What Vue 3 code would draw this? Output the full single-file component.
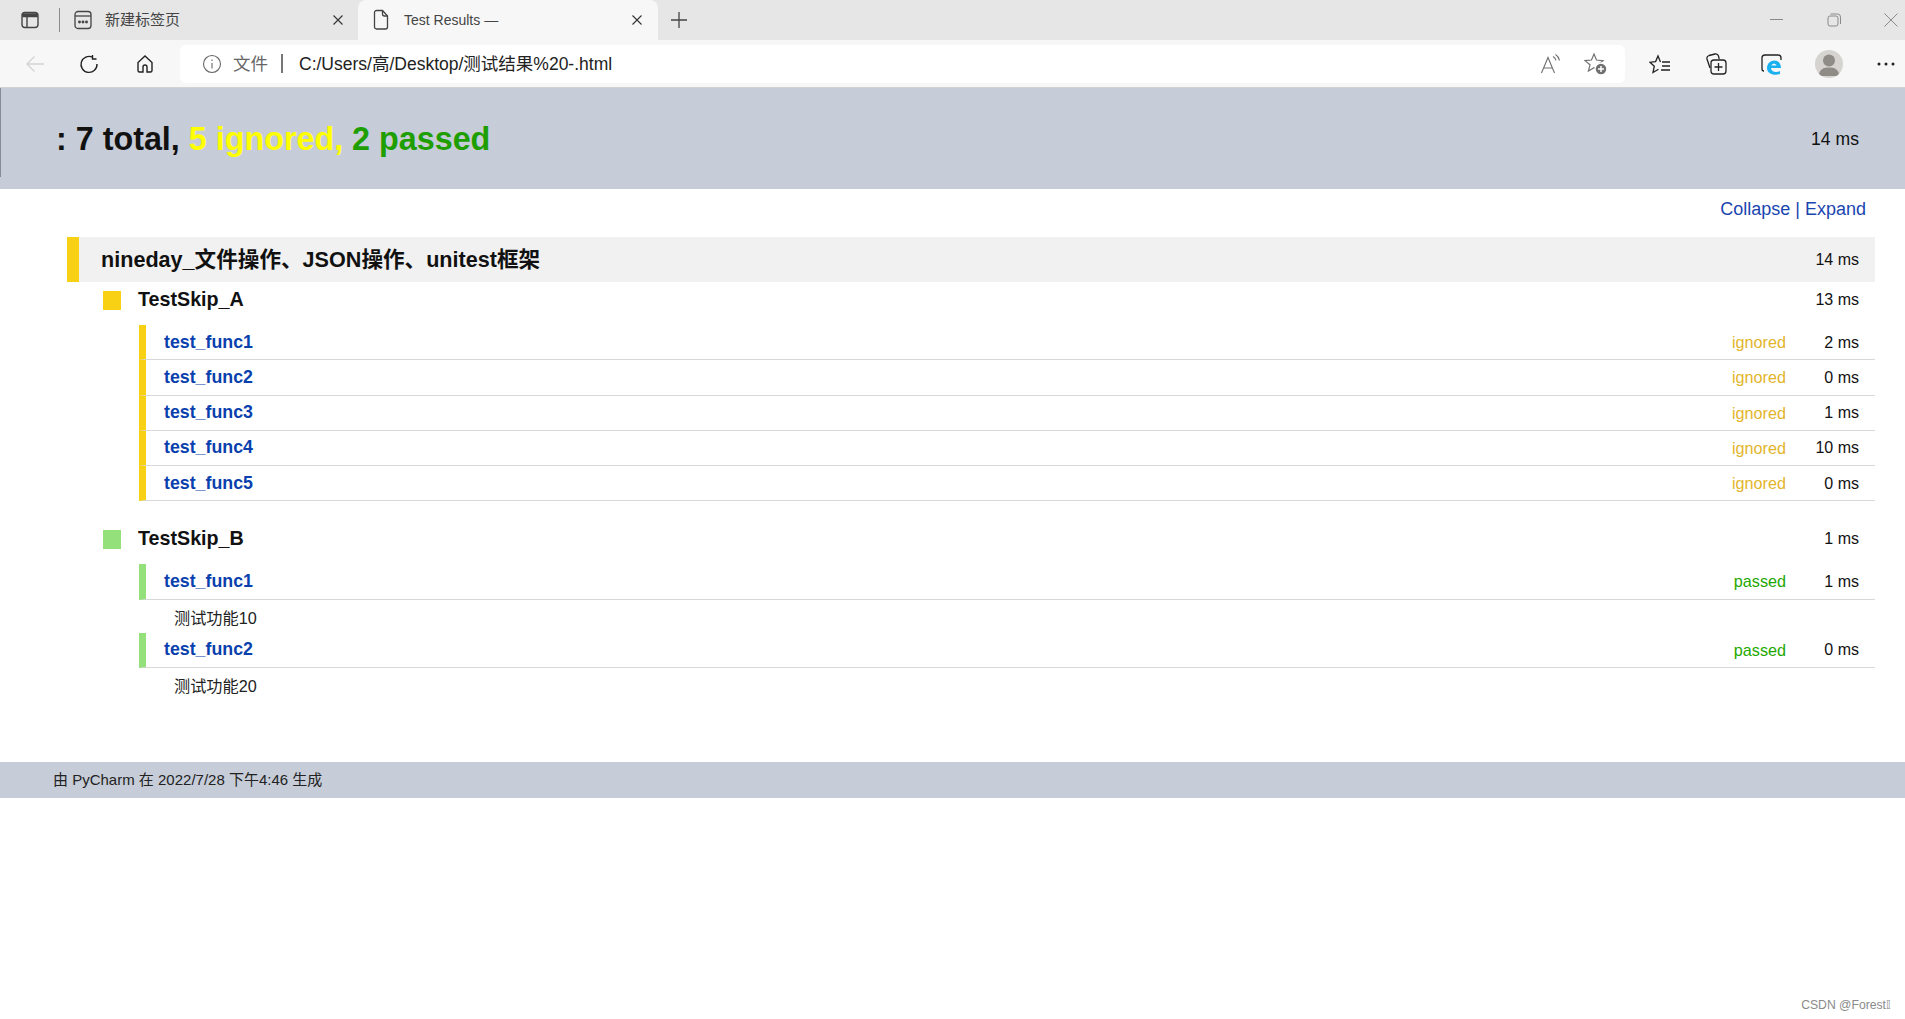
<script setup>
const ignored = [
  ['test_func1', '2 ms'],
  ['test_func2', '0 ms'],
  ['test_func3', '1 ms'],
  ['test_func4', '10 ms'],
  ['test_func5', '0 ms'],
]
const passed = [
  ['test_func1', '1 ms', '测试功能10'],
  ['test_func2', '0 ms', '测试功能20'],
]
</script>

<template>
  <div class="page">
    <div class="tabstrip">
      <svg class="tabside" width="20" height="20" viewBox="0 0 20 20" fill="none" stroke="#444" stroke-width="1.4">
        <rect x="2" y="2.500" width="16" height="15" rx="3" />
        <path d="M3 4h14v2.500H3z" fill="#444" />
        <path d="M7 6v11" />
      </svg>
      <span class="tabsep"></span>
      <div class="tab">
        <svg width="18" height="20" viewBox="0 0 18 20" fill="none" stroke="#444" stroke-width="1.3">
          <rect x="1" y="1.500" width="16" height="17" rx="3" />
          <path d="M1 6h16" />
          <circle cx="5.500" cy="12" r=".8" fill="#444" />
          <circle cx="9" cy="12" r=".8" fill="#444" />
          <circle cx="12.500" cy="12" r=".8" fill="#444" />
        </svg>
        <span class="tabtitle cjk">新建标签页</span>
        <svg class="tabclose" width="12" height="12" viewBox="0 0 12 12" stroke="#333" stroke-width="1.1"><path d="M1.500 1.500l9 9M10.500 1.500l-9 9" /></svg>
      </div>
      <div class="tab active">
        <svg width="18" height="22" viewBox="0 0 18 22" fill="none" stroke="#444" stroke-width="1.3">
          <path d="M4.500 1.500h6l5 5.500v11a2 2 0 0 1-2 2h-9a2 2 0 0 1-2-2V3.500a2 2 0 0 1 2-2z" />
          <path d="M10.500 1.500V5a2 2 0 0 0 2 2h3" />
        </svg>
        <span class="tabtitle">Test Results —</span>
        <svg class="tabclose" width="12" height="12" viewBox="0 0 12 12" stroke="#333" stroke-width="1.1"><path d="M1.500 1.500l9 9M10.500 1.500l-9 9" /></svg>
      </div>
      <svg class="newtab" width="18" height="18" viewBox="0 0 18 18" stroke="#444" stroke-width="1.3"><path d="M9 1v16M1 9h16" /></svg>
      <div class="winctl">
        <svg width="14" height="14" viewBox="0 0 14 14" stroke="#8a8a8a" stroke-width="1"><path d="M0 6.500h13" /></svg>
        <svg width="14" height="14" viewBox="0 0 14 14" fill="none" stroke="#8a8a8a" stroke-width="1"><rect x="1" y="3" width="10" height="10" rx="2" /><path d="M3.500 1h7a3 3 0 0 1 3 3v7" /></svg>
        <svg width="14" height="14" viewBox="0 0 14 14" stroke="#8a8a8a" stroke-width="1"><path d="M.5.5l13 13M13.500.5l-13 13" /></svg>
      </div>
    </div>

    <div class="toolbar">
      <svg class="navicon back" width="20" height="20" viewBox="0 0 20 20" fill="none" stroke="#d4d4d4" stroke-width="1.3"><path d="M19 10H2M9.500 2.500L2 10l7.500 7.500" /></svg>
      <svg class="navicon reload" width="20" height="20" viewBox="0 0 20 20" fill="none" stroke="#222" stroke-width="1.4"><path d="M13.500 3.200A8 8 0 1 0 18 10" /><path d="M13.500 1v4h4" /></svg>
      <svg class="navicon home" width="20" height="20" viewBox="0 0 20 20" fill="none" stroke="#222" stroke-width="1.4"><path d="M8 18H4.500A1.500 1.500 0 0 1 3 16.500V8.500l7-6.500 7 6.500v8a1.500 1.500 0 0 1-1.500 1.500H12v-5a2 2 0 0 0-4 0z" /></svg>
      <div class="address">
        <svg width="20" height="20" viewBox="0 0 20 20" fill="none" stroke="#666" stroke-width="1.1"><circle cx="10" cy="10" r="8.500" /><path d="M10 9v5.500M10 5.500v1.500" /></svg>
        <span class="origin">文件</span>
        <span class="addrsep"></span>
        <span class="url">C:/Users/高/Desktop/测试结果%20-.html</span>
        <div class="addricons">
          <svg width="22" height="22" viewBox="0 0 22 22" fill="none" stroke="#707070" stroke-width="1.100"><path d="M1.500 20L8 4.500 14.500 20M3.800 15h8.400" /><path d="M13 3.500a6 6 0 0 1 3 4M15.500 1.500a9 9 0 0 1 4 6" /></svg>
          <svg width="24" height="24" viewBox="0 0 24 24" fill="none" stroke="#707070" stroke-width="1.200"><path d="M10 2l2.500 6 6.500.6-5 4.200 1.600 6.200-5.600-3.300-5.600 3.300L6 12.800 1 8.600 7.500 8z" /><circle cx="17" cy="17" r="6" fill="#707070" stroke="#fff" stroke-width="1.500" /><path d="M17 14v6M14 17h6" stroke="#fff" stroke-width="1.500" /></svg>
        </div>
      </div>
      <div class="tools">
        <svg width="22" height="22" viewBox="0 0 22 22" fill="none" stroke="#222" stroke-width="1.300"><path d="M11.500 9L9 3 6.600 8.600 1 9.200l4.300 4L4 19.500l5.500-3.200" /><path d="M13 9h8M13 13h8M12 17h9" /></svg>
        <svg width="22" height="22" viewBox="0 0 22 22" fill="none" stroke="#222" stroke-width="1.300"><path d="M5 15L2 6a3 3 0 0 1 2-3.500L10 1a3 3 0 0 1 3.500 2l.7 3" /><rect x="6" y="7" width="15" height="14" rx="3" /><path d="M13.500 10v8M9.500 14h8" /></svg>
        <svg width="24" height="24" viewBox="0 0 24 24" fill="none"><path d="M5 19a2 2 0 0 1-2-2V6a3 3 0 0 1 3-3h13a3 3 0 0 1 3 3v2" stroke="#222" stroke-width="1.300" /><path d="M22 16h-10c.2 4 5 5 9 3v3c-6 2-13 0-13-6 0-6 6-9 10-7 2 1 4 3 4 7zM17.500 13.500c-.5-2.500-4.500-2.500-5 0z" fill="#1bb1f0" /></svg>
        <span class="avatar">
          <svg width="28" height="28" viewBox="0 0 28 28"><circle cx="14" cy="10.500" r="6" fill="#8f8c88" /><path d="M3.500 26c1-7 5-8.500 10.500-8.500S23.500 19 24.500 26z" fill="#8f8c88" /></svg>
        </span>
        <svg class="more" width="18" height="6" viewBox="0 0 18 6" fill="#222"><circle cx="2" cy="3" r="1.500" /><circle cx="9" cy="3" r="1.500" /><circle cx="16" cy="3" r="1.500" /></svg>
      </div>
    </div>

    <div class="report">
      <header class="summary">
        <h1><span>: 7 total, </span><span class="yellow">5 ignored, </span><span class="green">2 passed</span></h1>
        <span class="ms big">14 ms</span>
      </header>

      <div class="controls"><a>Collapse</a> | <a>Expand</a></div>

      <main class="results">
        <div class="suite">
          <span class="suitebar"></span>
          <span class="suitename">nineday_文件操作、JSON操作、unitest框架</span>
          <span class="ms">14 ms</span>
        </div>

        <div class="klass">
          <span class="square sq-yellow"></span>
          <span class="klassname">TestSkip_A</span>
          <span class="ms">13 ms</span>
        </div>
        <div class="tests">
          <div v-for="t in ignored" :key="t[0]" class="test ignored">
            <span class="testname">{{ t[0] }}</span>
            <span class="status st-ignored">ignored</span>
            <span class="ms time">{{ t[1] }}</span>
          </div>
        </div>

        <div class="klass second">
          <span class="square sq-green"></span>
          <span class="klassname">TestSkip_B</span>
          <span class="ms">1 ms</span>
        </div>
        <div class="tests">
          <template v-for="t in passed" :key="t[0]">
            <div class="test pass">
              <span class="testname">{{ t[0] }}</span>
              <span class="status st-passed">passed</span>
              <span class="ms time">{{ t[1] }}</span>
            </div>
            <div class="desc">{{ t[2] }}</div>
          </template>
        </div>
      </main>

      <footer class="foot">由 PyCharm 在 2022/7/28 下午4:46 生成</footer>
    </div>
    <div class="mark">CSDN @Forest𝕀</div>
  </div>
</template>

<style>
html, body { margin: 0; background: #fff; overflow: hidden; }
</style>

<style scoped>
.page {
  position: relative;
  height: 1019px;
  font-family: "Liberation Sans", "Noto Sans CJK SC", sans-serif;
  color: #111;
  background: #fff;
  overflow: hidden;
}
.tabstrip {
  height: 40px;
  background: #e6e6e6;
  display: flex;
  align-items: center;
  box-sizing: border-box;
}
.tabside { margin-left: 20px; }
.tabsep { width: 1px; height: 24px; background: #8c8c8c; margin: 0 14px 0 19px; }
.tab {
  height: 40px;
  width: 273px;
  display: flex;
  align-items: center;
  box-sizing: border-box;
  font-size: 15px;
  color: #444;
}
.tab.active {
  width: 300px;
  margin-left: 11px;
  padding-left: 14px;
  background: #f7f7f7;
  border-radius: 8px 8px 0 0;
  font-size: 14px;
}
.tabtitle { margin-left: 13px; flex: 1; }
.tabtitle.cjk { padding-bottom: 3px; }
.tab.active .tabtitle { margin-left: 14px; }
.tabclose { margin-right: 3px; }
.tab.active .tabclose { margin-right: 15px; }
.newtab { margin-left: 12px; }
.winctl {
  margin-left: auto;
  display: flex;
  gap: 43px;
  padding-right: 7px;
  align-items: center;
}
.toolbar {
  height: 48px;
  background: #f7f7f7;
  border-bottom: 1px solid #d2d2d2;
  box-sizing: border-box;
  display: flex;
  align-items: center;
}
.navicon.back { margin-left: 25px; }
.navicon.reload { margin-left: 34px; }
.navicon.home { margin-left: 36px; }
.address {
  margin-left: 25px;
  width: 1445px;
  height: 38px;
  background: #fff;
  border-radius: 6px;
  box-sizing: border-box;
  padding-left: 22px;
  display: flex;
  align-items: center;
}
.origin { font-size: 17.500px; color: #666; margin-left: 11px; padding-bottom: 2px; }
.addrsep { width: 2px; height: 19px; background: #777; margin: 0 16px 0 13px; }
.url { font-size: 17.500px; color: #222; padding-bottom: 2px; }
.addricons {
  margin-left: auto;
  display: flex;
  gap: 22px;
  align-items: center;
  padding-right: 17px;
}
.tools { display: flex; align-items: center; margin-left: 24px; }
.tools > svg:nth-child(2) { margin-left: 34px; }
.tools > svg:nth-child(3) { margin-left: 32px; }
.avatar {
  width: 28px;
  height: 28px;
  margin-left: 32px;
  border-radius: 50%;
  background: #d6d4d0;
  overflow: hidden;
}
.avatar svg { display: block; }
.more { margin-left: 34px; }

.summary {
  height: 101px;
  background: #c6ccd8;
  display: flex;
  align-items: center;
  justify-content: space-between;
  box-sizing: border-box;
  padding: 1px 46px 0 56px;
  position: relative;
}
.summary::before {
  content: "";
  position: absolute;
  left: 0;
  top: 0;
  width: 1px;
  height: 89px;
  background: #868b98;
}
h1 { margin: 0; font-size: 32.300px; font-weight: 700; white-space: pre; }
.yellow { color: #ffff00; }
.green { color: #1e9e00; }
.ms { font-size: 16px; color: #111; }
.ms.big { font-size: 17.600px; }
.controls {
  height: 48px;
  box-sizing: border-box;
  padding-top: 10px;
  text-align: right;
  margin-right: 39px;
  font-size: 18px;
  color: #1a46b0;
}
.results { margin: 0 30px 0 67px; }
.suite {
  height: 45px;
  background: #f1f1f1;
  display: flex;
  align-items: center;
  padding-right: 16px;
}
.suitebar { width: 12px; height: 45px; background: #f8d115; margin-right: 22px; }
.suitename { font-size: 21.600px; font-weight: 700; flex: 1; padding-bottom: 4px; }
.klass {
  height: 36px;
  display: flex;
  align-items: center;
  padding-right: 16px;
  padding-left: 36px;
}
.klass.second { margin-top: 20px; }
.square { width: 18px; height: 19px; margin-right: 17px; }
.sq-yellow { background: #f8d115; }
.sq-green { background: #94e07a; }
.klassname { font-size: 19.700px; font-weight: 700; flex: 1; padding-bottom: 2px; }
.tests { margin: 7px 0 0 72px; }
.test {
  height: 35.250px;
  box-sizing: border-box;
  display: flex;
  align-items: center;
  border-bottom: 1px solid #d8d8d8;
  border-left: 7px solid;
  padding: 0 16px 0 18px;
}
.test.ignored { border-left-color: #f8d115; }
.test.pass { border-left-color: #94e07a; }
.testname { font-size: 17.800px; font-weight: 700; color: #0a3fae; flex: 1; }
.status { font-size: 16.200px; padding-top: 1px; }
.st-ignored { color: #e3b52a; }
.st-passed { color: #1ea800; }
.time { width: 73px; text-align: right; padding-top: 1px; }
.desc { height: 33px; line-height: 36px; font-size: 16.200px; padding-left: 35px; color: #222; }
.foot {
  margin-top: 61px;
  height: 36px;
  line-height: 36px;
  background: #c6ccd8;
  padding-left: 53px;
  font-size: 15px;
  color: #222;
}
.mark {
  position: absolute;
  right: 14px;
  bottom: 7px;
  font-size: 12.200px;
  color: #8a8a8a;
}
</style>
